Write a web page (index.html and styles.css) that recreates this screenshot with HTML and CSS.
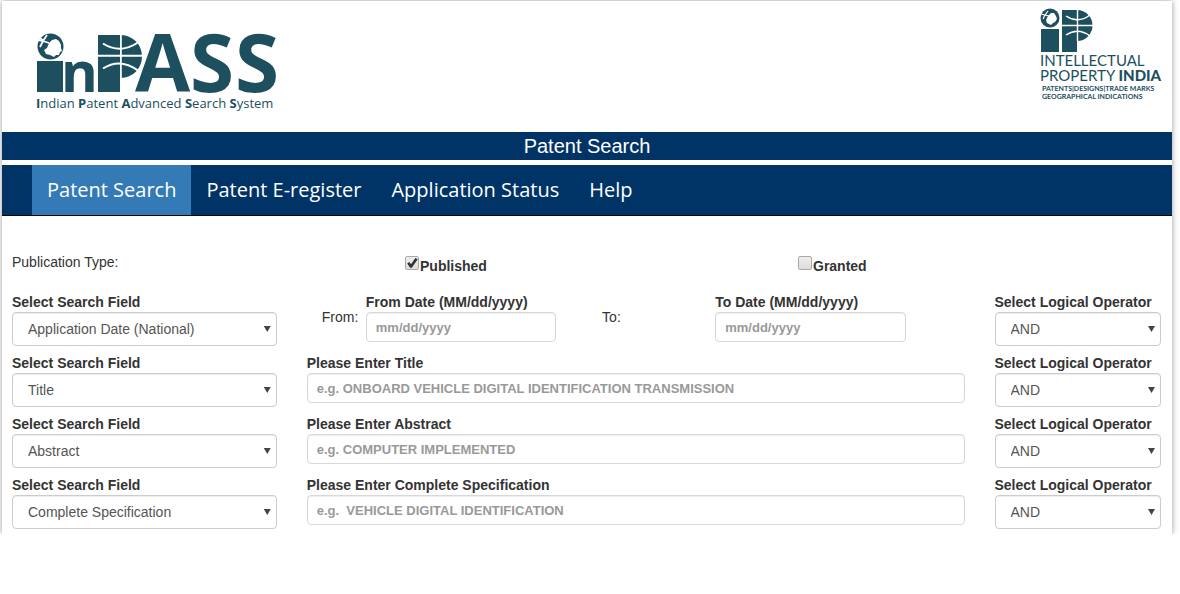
FILE: index.html
```html
<!DOCTYPE html>
<html lang="en">
<head>
<meta charset="utf-8">
<title>Patent Search</title>
<link rel="stylesheet" href="styles.css">
</head>
<body>
<div class="viewport">
<div class="page">
  <header class="header">
    <svg class="logo-inpass" width="244" height="84" viewBox="0 0 244 84" role="img" aria-label="inPASS">
      <circle cx="15.500" cy="19.500" r="13"/>
      <path class="cut" d="M14 16l3-3 4-1 3 2 2 4 0 3 1 3-2 1-1 3-3 0-2 2-4-2-4-1-2-4 3-2z"/>
      <path class="cut-line" d="M3 13l5 1 4-6M8 14l-3 6M8 14l6 2M8 14l-4-5" stroke-width="1.800"/>
      <path d="M2 34h26v31H2z"/>
      <text x="26" y="65" class="mark" font-size="56">n</text>
      <path d="M63 8h22v57H63zM86 8a21 21.500 0 0 1 0 43z"/>
      <path class="cut-line" d="M63 28.800h46" stroke-width="2"/>
      <path class="cut-line" d="M86 8v43" stroke-width="1.600"/>
      <path class="cut-line" d="M68 16.500q17 11 35-1M68 41.500q17-11 35 2" stroke-width="2"/>
      <text x="100" y="65" class="mark" font-size="80">A</text>
      <text x="155" y="65" class="mark" font-size="80">S</text>
      <text x="200" y="65" class="mark" font-size="80">S</text>
      <text x="1" y="81" class="tagline"><tspan class="b">I</tspan>ndian <tspan class="b">P</tspan>atent <tspan class="b">A</tspan>dvanced <tspan class="b">S</tspan>earch <tspan class="b">S</tspan>ystem</text>
    </svg>
    <svg class="logo-ip" width="126" height="94" viewBox="0 0 126 94" role="img" aria-label="Intellectual Property India">
      <circle cx="11" cy="10" r="9.500"/>
      <path class="cut" d="M9 8l3-3 3 0 2 3 1 3-2 3-2 1-2 2-4-2-1-3z"/>
      <path class="cut-line" d="M2 6l4 1 3-4M6 7l-2 4M6 7l4 1" stroke-width="1.200"/>
      <path d="M2 21h18v23H2zM23 2h15v42H23zM38 2a15.500 15.500 0 0 1 0 31z"/>
      <path class="cut-line" d="M23 17.500h32M38.500 2v31" stroke-width="1.400"/>
      <path class="cut-line" d="M27 8q12 8 24-1M27 27q12-8 24 1" stroke-width="1.500"/>
      <text x="1" y="58" class="ip-main">INTELLECTUAL</text>
      <text x="1" y="73" class="ip-main">PROPERTY <tspan class="heavy">INDIA</tspan></text>
      <text x="3" y="83" class="ip-sub">PATENTS|DESIGNS|TRADE MARKS</text>
      <text x="3" y="91" class="ip-sub">GEOGRAPHICAL INDICATIONS</text>
    </svg>
  </header>
  <h1 class="title">Patent Search</h1>
  <nav class="nav">
    <a class="active" href="#">Patent Search</a>
    <a href="#">Patent E-register</a>
    <a href="#">Application Status</a>
    <a href="#">Help</a>
  </nav>
  <form class="form">
    <div class="row types">
      <span class="type-label">Publication Type:</span>
      <label class="check"><input type="checkbox" checked>Published</label>
      <label class="check"><input type="checkbox">Granted</label>
    </div>
    <div class="row">
      <div class="field">
        <label for="f1">Select Search Field</label>
        <div class="select"><select id="f1"><option>Application Date (National)</option></select></div>
      </div>
      <div class="dates">
        <span class="hint">From:</span>
        <div class="date"><label for="from">From Date (MM/dd/yyyy)</label><input id="from" type="text" placeholder="mm/dd/yyyy"></div>
        <span class="hint">To:</span>
        <div class="date"><label for="to">To Date (MM/dd/yyyy)</label><input id="to" type="text" placeholder="mm/dd/yyyy"></div>
      </div>
      <div class="operator">
        <label for="o1">Select Logical Operator</label>
        <div class="select"><select id="o1"><option>AND</option></select></div>
      </div>
    </div>
    <div class="row">
      <div class="field">
        <label for="f2">Select Search Field</label>
        <div class="select"><select id="f2"><option>Title</option></select></div>
      </div>
      <div class="query"><label for="q2">Please Enter Title</label><input id="q2" type="text" placeholder="e.g. ONBOARD VEHICLE DIGITAL IDENTIFICATION TRANSMISSION"></div>
      <div class="operator">
        <label for="o2">Select Logical Operator</label>
        <div class="select"><select id="o2"><option>AND</option></select></div>
      </div>
    </div>
    <div class="row">
      <div class="field">
        <label for="f3">Select Search Field</label>
        <div class="select"><select id="f3"><option>Abstract</option></select></div>
      </div>
      <div class="query"><label for="q3">Please Enter Abstract</label><input id="q3" type="text" placeholder="e.g. COMPUTER IMPLEMENTED"></div>
      <div class="operator">
        <label for="o3">Select Logical Operator</label>
        <div class="select"><select id="o3"><option>AND</option></select></div>
      </div>
    </div>
    <div class="row">
      <div class="field">
        <label for="f4">Select Search Field</label>
        <div class="select"><select id="f4"><option>Complete Specification</option></select></div>
      </div>
      <div class="query"><label for="q4">Please Enter Complete Specification</label><input id="q4" type="text" placeholder="e.g.  VEHICLE DIGITAL IDENTIFICATION"></div>
      <div class="operator">
        <label for="o4">Select Logical Operator</label>
        <div class="select"><select id="o4"><option>AND</option></select></div>
      </div>
    </div>
  </form>
</div>
</div>
</body>
</html>
```
FILE: styles.css
```css
* { box-sizing: border-box; }
body {
  margin: 0;
  background: #fff;
  color: #333;
  font: 14px/20px "Liberation Sans", Arial, sans-serif;
}
.viewport { overflow: hidden; padding: 1px 8px 0 2px; }
.page { background: #fff; box-shadow: 0 0 6px #999; }

.header {
  display: flex;
  justify-content: space-between;
  align-items: flex-start;
  padding: 7px 7px 21px 33px;
  fill: #1d4f5f;
}
.header svg { overflow: visible; }
.logo-inpass { margin-top: 19px; }
.cut { fill: #fff; }
.cut-line { fill: none; stroke: #fff; }
.mark { font-family: "Open Sans", sans-serif; font-weight: 700; }
.tagline { font: 500 13px "Open Sans", sans-serif; }
.tagline .b { font-weight: 700; }
.ip-main { font: 400 15px Lato, sans-serif; }
.ip-main .heavy { font-weight: 900; }
.ip-sub { font: 700 7px Lato, sans-serif; text-rendering: geometricPrecision; }

.title {
  margin: 0 0 5px;
  background: #003366;
  color: #fff;
  font-size: 20px;
  font-weight: 400;
  line-height: 28px;
  text-align: center;
}
.nav {
  display: flex;
  padding-left: 30px;
  background: #003366;
  border-bottom: 1px solid #080808;
}
.nav a {
  padding: 10px 15px;
  color: #fff;
  font: 20px/30px "Open Sans", sans-serif;
  text-decoration: none;
}
.nav .active { background: #337ab7; }

.form { padding: 36px 11px 5px 10px; }
.row {
  display: grid;
  grid-template-columns: repeat(12, minmax(0, 1fr));
  column-gap: 30px;
  margin-bottom: 7px;
}
.row:last-child { margin-bottom: 0; }
.types { margin-bottom: 16px; }
.type-label, .check { grid-column: span 4; }
.field { grid-column: span 3; }
.query, .dates { grid-column: span 7; }
.operator { grid-column: span 2; white-space: nowrap; }
label { display: block; font-weight: 700; }
.check { display: flex; gap: 1px; padding-top: 4px; }
.check input {
  appearance: none;
  width: 14px;
  height: 14px;
  margin: 0;
  border: 1px solid #aaa;
  border-radius: 2px;
  background: linear-gradient(#eee, #ddd);
}
.check input:checked::before {
  content: "";
  display: block;
  height: 12px;
  background: #333;
  clip-path: polygon(10% 55%, 28% 42%, 42% 60%, 78% 8%, 98% 18%, 48% 90%, 34% 90%);
}

.dates {
  display: grid;
  grid-template-columns: 44fr 236fr 113fr 190fr;
  padding: 0 59px 0 15px;
}
.dates .date:nth-child(2) { padding-right: 46px; }
.hint { padding-top: 15px; }
.date { white-space: nowrap; }

input[type="text"], select {
  display: block;
  width: 100%;
  border: 1px solid #ccc;
  border-radius: 4px;
  background: #fff;
  box-shadow: inset 0 1px 1px rgba(0, 0, 0, .075);
}
input[type="text"] {
  height: 30px;
  padding: 5px 9px;
  border-color: #d8d8d8;
  font: 700 13px/18px "Liberation Sans", Arial, sans-serif;
}
input::placeholder { color: #999; opacity: 1; }
select {
  appearance: none;
  height: 34px;
  padding: 6px 15px;
  color: #555;
  font: 14px/20px "Liberation Sans", Arial, sans-serif;
}
.select { position: relative; }
.select::after {
  content: "";
  position: absolute;
  top: 14px;
  right: 6px;
  width: 7px;
  height: 6px;
  background: #444;
  clip-path: polygon(0 0, 100% 0, 50% 100%);
  pointer-events: none;
}
```
